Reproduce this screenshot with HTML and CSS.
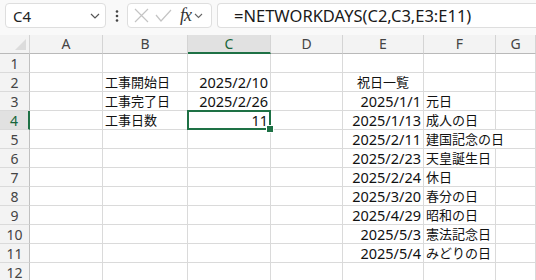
FILE: index.html
```html
<!DOCTYPE html>
<html lang="ja">
<head>
    <meta charset="UTF-8">
    <title>工事日数</title>
    <link rel="stylesheet" href="styles.css">
</head>
<body>
<div class="formula-bar">
    <div class="name-box">
        <span>C4</span>
        <svg class="chev" width="10" height="6" viewBox="0 0 10 6"><path d="M1 1l4 4 4-4" fill="none" stroke="#555" stroke-width="1.2"/></svg>
    </div>
    <svg class="dots" width="4" height="12" viewBox="0 0 4 12"><circle cx="2" cy="1.5" r="1.3" fill="#444"/><circle cx="2" cy="6" r="1.3" fill="#444"/><circle cx="2" cy="10.5" r="1.3" fill="#444"/></svg>
    <div class="fx-box">
        <svg width="15" height="15" viewBox="0 0 15 15"><path d="M1 1l13 13M14 1L1 14" stroke="#c4c4c4" stroke-width="1.2"/></svg>
        <svg width="17" height="13" viewBox="0 0 17 13"><path d="M1 6l5 6L16 1" fill="none" stroke="#c4c4c4" stroke-width="1.2"/></svg>
        <i class="fx">fx</i>
        <svg class="chev" width="9" height="6" viewBox="0 0 9 6"><path d="M1 1l3.5 3.5L8 1" fill="none" stroke="#666" stroke-width="1.1"/></svg>
    </div>
    <div class="formula">=NETWORKDAYS(C2,C3,E3:E11)</div>
</div>

<div class="sheet">
    <div class="corner"><span class="tri"></span></div>
    <div class="col-head">A</div>
    <div class="col-head">B</div>
    <div class="col-head active">C</div>
    <div class="col-head">D</div>
    <div class="col-head">E</div>
    <div class="col-head">F</div>
    <div class="col-head">G</div>

    <div class="row-head">1</div>
    <div class="cell"></div><div class="cell"></div><div class="cell"></div><div class="cell"></div><div class="cell"></div><div class="cell"></div><div class="cell"></div>

    <div class="row-head">2</div>
    <div class="cell"></div>
    <div class="cell jp">工事開始日</div>
    <div class="cell num">2025/2/10</div>
    <div class="cell"></div>
    <div class="cell jp center">祝日一覧</div>
    <div class="cell"></div><div class="cell"></div>

    <div class="row-head">3</div>
    <div class="cell"></div>
    <div class="cell jp">工事完了日</div>
    <div class="cell num">2025/2/26</div>
    <div class="cell"></div>
    <div class="cell num">2025/1/1</div>
    <div class="cell jp">元日</div>
    <div class="cell"></div>

    <div class="row-head active">4</div>
    <div class="cell"></div>
    <div class="cell jp">工事日数</div>
    <div class="cell num selected">11</div>
    <div class="cell"></div>
    <div class="cell num">2025/1/13</div>
    <div class="cell jp">成人の日</div>
    <div class="cell"></div>

    <div class="row-head">5</div>
    <div class="cell"></div><div class="cell"></div><div class="cell"></div><div class="cell"></div>
    <div class="cell num">2025/2/11</div>
    <div class="cell jp span2">建国記念の日</div>

    <div class="row-head">6</div>
    <div class="cell"></div><div class="cell"></div><div class="cell"></div><div class="cell"></div>
    <div class="cell num">2025/2/23</div>
    <div class="cell jp">天皇誕生日</div>
    <div class="cell"></div>

    <div class="row-head">7</div>
    <div class="cell"></div><div class="cell"></div><div class="cell"></div><div class="cell"></div>
    <div class="cell num">2025/2/24</div>
    <div class="cell jp">休日</div>
    <div class="cell"></div>

    <div class="row-head">8</div>
    <div class="cell"></div><div class="cell"></div><div class="cell"></div><div class="cell"></div>
    <div class="cell num">2025/3/20</div>
    <div class="cell jp">春分の日</div>
    <div class="cell"></div>

    <div class="row-head">9</div>
    <div class="cell"></div><div class="cell"></div><div class="cell"></div><div class="cell"></div>
    <div class="cell num">2025/4/29</div>
    <div class="cell jp">昭和の日</div>
    <div class="cell"></div>

    <div class="row-head">10</div>
    <div class="cell"></div><div class="cell"></div><div class="cell"></div><div class="cell"></div>
    <div class="cell num">2025/5/3</div>
    <div class="cell jp">憲法記念日</div>
    <div class="cell"></div>

    <div class="row-head">11</div>
    <div class="cell"></div><div class="cell"></div><div class="cell"></div><div class="cell"></div>
    <div class="cell num">2025/5/4</div>
    <div class="cell jp">みどりの日</div>
    <div class="cell"></div>

    <div class="row-head">12</div>
    <div class="cell"></div><div class="cell"></div><div class="cell"></div><div class="cell"></div><div class="cell"></div><div class="cell"></div><div class="cell"></div>
</div>
</body>
</html>
```

FILE: styles.css
```css
body {
    margin: 0;
    font-family: "Noto Sans", "Noto Sans CJK JP", sans-serif;
    color: #111;
    background: #fff;
    overflow: hidden;
}

.formula-bar {
    height: 35px;
    box-sizing: border-box;
    padding: 3px 0 0 5px;
    background: #f9f9f9;
    display: flex;
    align-items: flex-start;
}

.name-box, .fx-box, .formula {
    height: 25px;
    box-sizing: border-box;
    background: #fff;
    border: 1px solid #dedede;
    border-radius: 4px;
    display: flex;
    align-items: center;
}

.name-box {
    width: 101px;
    padding: 0 5px 0 7px;
    justify-content: space-between;
    font-size: 15px;
    color: #222;
}

.dots {
    margin: 7px 8px 0 9px;
}

.fx-box {
    width: 85px;
    padding: 0 3px 0 6px;
    gap: 6px;
}

.fx {
    font-family: "Liberation Serif", serif;
    font-size: 18px;
    color: #333;
    margin-left: 2px;
    letter-spacing: -1px;
}

.fx-box .chev {
    margin-left: -3px;
}

.formula {
    flex: 1;
    margin-left: 5px;
    padding-left: 16px;
    font-size: 16.5px;
    color: #1a1a1a;
    border-right: none;
    border-radius: 4px 0 0 4px;
}

.sheet {
    display: grid;
    grid-template-columns: 30px 73px 85px 83px 72px 81px 72px 1fr;
    grid-template-rows: 19px;
    grid-auto-rows: 19px;
}

.corner {
    background: #f3f3f3;
    border-right: 1px solid #d4d4d4;
    border-bottom: 1px solid #b9b9b9;
    display: flex;
    justify-content: flex-end;
    align-items: flex-end;
    padding: 0 3px 3px 0;
}

.tri {
    width: 0;
    height: 0;
    border-left: 11px solid transparent;
    border-bottom: 11px solid #dcdcdc;
}

.col-head {
    background: #f3f3f3;
    border-right: 1px solid #d4d4d4;
    border-bottom: 1px solid #b9b9b9;
    text-align: center;
    font-size: 14px;
    line-height: 18px;
    color: #444;
}

.col-head.active {
    background: #e1e1e1;
    color: #17663a;
    border-bottom: 2px solid #1e7145;
}

.row-head {
    background: #f3f3f3;
    border-right: 1px solid #c0c0c0;
    border-bottom: 1px solid #dadada;
    text-align: center;
    font-size: 14px;
    line-height: 19px;
    color: #444;
}

.row-head.active {
    background: #e1e1e1;
    color: #17663a;
    border-right: 2px solid #1e7145;
}

.cell {
    border-right: 1px solid #dadada;
    border-bottom: 1px solid #dadada;
    font-size: 14.5px;
    line-height: 19px;
    padding: 0 2px;
    white-space: nowrap;
    position: relative;
}

.jp {
    font-size: 13px;
}

.num {
    text-align: right;
}

.center {
    text-align: center;
}

.span2 {
    grid-column: span 2;
}

.selected::after {
    content: "";
    position: absolute;
    left: -1px;
    top: -1px;
    right: -1px;
    bottom: -1px;
    border: 2px solid #1e7145;
}

.selected::before {
    content: "";
    position: absolute;
    right: -4px;
    bottom: -4px;
    width: 6px;
    height: 6px;
    background: #1e7145;
    border: 1px solid #fff;
    z-index: 1;
}
```
